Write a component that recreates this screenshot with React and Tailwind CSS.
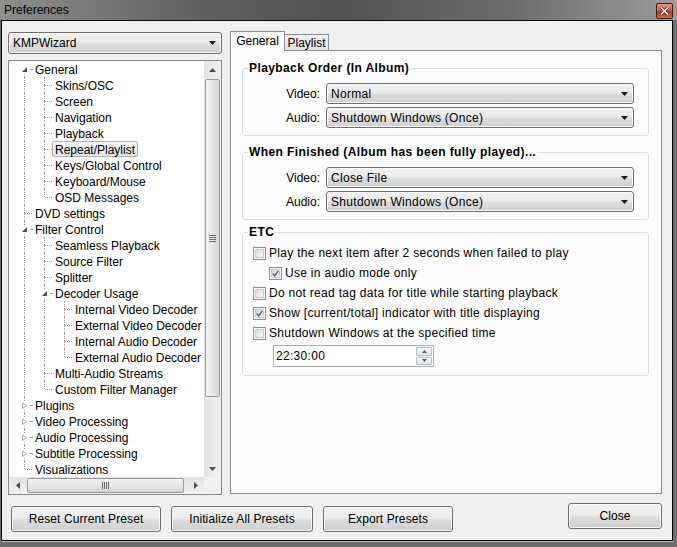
import React from "react";

const btnBg =
  "bg-[linear-gradient(#f2f2f2,#ebebeb_45%,#dddddd_55%,#cfcfcf)] shadow-[inset_0_0_0_1px_#fbfbfb]";

function DownArrow() {
  return (
    <svg width="7" height="4" viewBox="0 0 7 4">
      <path d="M0 0h7L3.5 4z" fill="#1b1b1b" />
    </svg>
  );
}

function Combo({ value, className = "", textClass = "" }) {
  return (
    <div
      className={`flex items-center justify-between rounded-[3px] border border-[#707070] pl-[4px] pr-[5px] ${btnBg} ${className}`}
    >
      <span className={`leading-none ${textClass}`}>{value}</span>
      <DownArrow />
    </div>
  );
}

function Button({ children, className = "" }) {
  return (
    <div
      className={`flex h-[26px] items-center justify-center rounded-[3px] border border-[#707070] tracking-[0.1px] ${btnBg} ${className}`}
    >
      {children}
    </div>
  );
}

function CheckBox({ checked }) {
  return (
    <div className="flex h-[13px] w-[13px] shrink-0 items-center justify-center border border-[#8e8f8f] bg-white p-[1px]">
      <div className="flex h-full w-full items-center justify-center border border-[#c9c9c9] bg-[linear-gradient(135deg,#d8d8d8,#f6f6f6)]">
        {checked && (
          <svg width="9" height="9" viewBox="0 0 9 9">
            <path d="M1 4.5l2.5 3L8 1" stroke="#4a5f97" strokeWidth="1.8" fill="none" />
          </svg>
        )}
      </div>
    </div>
  );
}

const tree = [
  { t: "General", g: [], exp: "open", first: true },
  { t: "Skins/OSC", g: [1] },
  { t: "Screen", g: [1] },
  { t: "Navigation", g: [1] },
  { t: "Playback", g: [1] },
  { t: "Repeat/Playlist", g: [1], sel: true },
  { t: "Keys/Global Control", g: [1] },
  { t: "Keyboard/Mouse", g: [1] },
  { t: "OSD Messages", g: [1], last: true },
  { t: "DVD settings", g: [] },
  { t: "Filter Control", g: [], exp: "open" },
  { t: "Seamless Playback", g: [1] },
  { t: "Source Filter", g: [1] },
  { t: "Splitter", g: [1] },
  { t: "Decoder Usage", g: [1], exp: "open" },
  { t: "Internal Video Decoder", g: [1, 1] },
  { t: "External Video Decoder", g: [1, 1] },
  { t: "Internal Audio Decoder", g: [1, 1] },
  { t: "External Audio Decoder", g: [1, 1], last: true },
  { t: "Multi-Audio Streams", g: [1] },
  { t: "Custom Filter Manager", g: [1], last: true },
  { t: "Plugins", g: [], exp: "closed" },
  { t: "Video Processing", g: [], exp: "closed" },
  { t: "Audio Processing", g: [], exp: "closed" },
  { t: "Subtitle Processing", g: [], exp: "closed" },
  { t: "Visualizations", g: [], last: true },
];

const dots = "border-dotted border-[#a0a0a0]";

function TreeRow({ row }) {
  return (
    <div className="flex h-[16px] items-stretch whitespace-nowrap">
      {row.g.map((on, i) => (
        <div key={i} className="relative w-[20px] shrink-0">
          {on ? <span className={`absolute left-[12px] top-0 bottom-0 border-l ${dots}`} /> : null}
        </div>
      ))}
      <div className="relative w-[20px] shrink-0">
        {!row.first && <span className={`absolute left-[12px] top-0 h-[8px] border-l ${dots}`} />}
        {!row.last && <span className={`absolute left-[12px] top-[8px] bottom-0 border-l ${dots}`} />}
        <span
          className={`absolute right-0 top-[8px] border-t ${dots} ${row.exp ? "left-[18px]" : "left-[13px]"}`}
        />
        {row.exp && (
          <span className="absolute left-[8px] top-[4px] flex h-[9px] w-[9px] items-center justify-center bg-white">
            {row.exp === "open" ? (
              <svg width="7" height="7" viewBox="0 0 7 7">
                <path d="M6 1V6H1z" fill="#4f4f4f" />
              </svg>
            ) : (
              <svg width="7" height="9" viewBox="0 0 7 9">
                <path d="M1.5 1.5L5.5 4.5L1.5 7.5z" fill="#fff" stroke="#a6a6a6" />
              </svg>
            )}
          </span>
        )}
      </div>
      <span
        className={`flex h-[16px] items-center rounded-[2px] border px-[2px] pt-[1px] ${
          row.sel
            ? "border-[#b3b3b3] bg-[linear-gradient(#f7f7f7,#e3e3e3)]"
            : "border-transparent"
        }`}
      >
        {row.t}
      </span>
    </div>
  );
}

function ScrollArrow({ dir }) {
  if (dir === "left" || dir === "right") {
    return (
      <svg width="4" height="7" viewBox="0 0 4 7">
        <path d={dir === "left" ? "M4 0v7L0 3.5z" : "M0 0v7L4 3.5z"} fill="#4d4d4d" />
      </svg>
    );
  }
  return (
    <svg width="7" height="4" viewBox="0 0 7 4">
      <path d={dir === "up" ? "M0 4h7L3.5 0z" : "M0 0h7L3.5 4z"} fill="#4d4d4d" />
    </svg>
  );
}

function GroupBox({ title, className = "", children }) {
  return (
    <fieldset className={`ml-[11px] w-[407px] rounded-[3px] border border-[#d5dfe5] ${className}`}>
      <legend className="ml-[5px] px-[1px] text-[12px] font-bold leading-[14px] tracking-[0.4px]">
        {title}
      </legend>
      {children}
    </fieldset>
  );
}

function ComboRow({ label, value }) {
  return (
    <div className="flex h-[21px] items-center">
      <span className="w-[77px] text-right">{label}</span>
      <Combo value={value} className="ml-[6px] h-[21px] w-[308px]" textClass="tracking-[0.3px]" />
    </div>
  );
}

function CheckRow({ checked, indent, children }) {
  return (
    <div className={`flex h-[20px] items-center gap-[3px] ${indent ? "pl-[26px]" : "pl-[10px]"}`}>
      <CheckBox checked={checked} />
      <span className="tracking-[0.3px]">{children}</span>
    </div>
  );
}

export default function App() {
  return (
    <div className="relative h-[547px] w-[677px] overflow-hidden bg-[#6e6e6e] font-['Liberation_Sans',Arial,sans-serif] text-[12px] text-black">
      <div className="flex h-[20px] items-center justify-between bg-[linear-gradient(90deg,#8e8e8e,#5f5f5f_30%,#525252_50%,#6b6b6b_75%,#9c9c9c)] pl-[4px] pr-[4px]">
        <span className="text-[12px] text-black">Preferences</span>
        <div className="mt-[1px] flex h-[16px] w-[17px] items-center justify-center rounded-[2px] border border-[#4a1a15] bg-[linear-gradient(#e39a89,#cf5a43_45%,#b8321e_55%,#d06a4f)]">
          <svg width="9" height="8" viewBox="0 0 9 8">
            <path d="M1 0.5l7 7M8 0.5l-7 7" stroke="#3a1d18" strokeWidth="3" />
            <path d="M1 0.5l7 7M8 0.5l-7 7" stroke="#fff" strokeWidth="1.6" />
          </svg>
        </div>
      </div>

      <div className="ml-[1px] flex h-[521px] w-[672px] flex-col border border-black bg-[#f0f0f0] pl-[6px] pr-[10px] pt-[11px]">
        <div className="flex items-start gap-[8px]">
          <div className="flex w-[214px] flex-col gap-[6px]">
            <Combo value="KMPWizard" className="h-[22px] w-[214px]" />
            <div className="flex h-[435px] w-[214px] flex-col border border-[#828790] bg-white">
              <div className="flex h-[416px]">
                <div className="w-[195px] overflow-hidden pl-[3px]">
                  {tree.map((r) => (
                    <TreeRow key={r.t} row={r} />
                  ))}
                </div>
                <div className="flex w-[17px] flex-col bg-[linear-gradient(90deg,#e3e3e3,#f1f1f1)]">
                  <div className="flex h-[17px] items-center justify-center">
                    <ScrollArrow dir="up" />
                  </div>
                  <div className="mx-[1px] mt-[1px] flex h-[318px] items-center justify-center rounded-[2px] border border-[#9b9b9b] bg-[linear-gradient(90deg,#f4f4f4,#e6e6e6_50%,#d4d4d4)]">
                    <div className="flex flex-col gap-[1px]">
                      <span className="h-[1px] w-[7px] bg-[#6e6e6e]" />
                      <span className="h-[1px] w-[7px] bg-[#6e6e6e]" />
                      <span className="h-[1px] w-[7px] bg-[#6e6e6e]" />
                      <span className="h-[1px] w-[7px] bg-[#6e6e6e]" />
                    </div>
                  </div>
                  <div className="flex-1" />
                  <div className="flex h-[17px] items-center justify-center">
                    <ScrollArrow dir="down" />
                  </div>
                </div>
              </div>
              <div className="flex h-[17px]">
                <div className="flex w-[195px] items-center bg-[linear-gradient(#e3e3e3,#f1f1f1)]">
                  <div className="flex h-[17px] w-[17px] items-center justify-center">
                    <ScrollArrow dir="left" />
                  </div>
                  <div className="ml-[1px] flex h-[15px] w-[157px] items-center justify-center rounded-[2px] border border-[#9b9b9b] bg-[linear-gradient(#f4f4f4,#e6e6e6_50%,#d4d4d4)]">
                    <div className="flex gap-[1px]">
                      <span className="h-[7px] w-[1px] bg-[#6e6e6e]" />
                      <span className="h-[7px] w-[1px] bg-[#6e6e6e]" />
                      <span className="h-[7px] w-[1px] bg-[#6e6e6e]" />
                      <span className="h-[7px] w-[1px] bg-[#6e6e6e]" />
                    </div>
                  </div>
                  <div className="flex-1" />
                  <div className="flex h-[17px] w-[17px] items-center justify-center">
                    <ScrollArrow dir="right" />
                  </div>
                </div>
                <div className="w-[17px] bg-[#f0f0f0]" />
              </div>
            </div>
          </div>

          <div className="flex w-[432px] flex-col">
            <div className="flex h-[18px] items-end">
              <div className="relative z-10 -mb-[1px] flex h-[20px] w-[55px] items-center justify-center border border-b-0 border-[#898c95] bg-[#fcfcfc] pb-[1px]">
                General
              </div>
              <div className="flex h-[16px] w-[44px] items-center justify-center border border-b-0 border-l-0 border-[#898c95] bg-[linear-gradient(#f2f2f2,#e3e3e3)]">
                Playlist
              </div>
            </div>
            <div className="flex h-[444px] flex-col border border-[#898c95] bg-[#fcfcfc]">
              <GroupBox title="Playback Order (In Album)" className="mt-[10px] pb-[7px] pt-[8px]">
                <div className="flex flex-col gap-[3px]">
                  <ComboRow label="Video:" value="Normal" />
                  <ComboRow label="Audio:" value="Shutdown Windows (Once)" />
                </div>
              </GroupBox>
              <GroupBox
                title="When Finished (Album has been fully played)..."
                className="mt-[9px] pb-[7px] pt-[8px]"
              >
                <div className="flex flex-col gap-[3px]">
                  <ComboRow label="Video:" value="Close File" />
                  <ComboRow label="Audio:" value="Shutdown Windows (Once)" />
                </div>
              </GroupBox>
              <GroupBox title="ETC" className="mt-[5px] pb-[8px] pt-[4px]">
                <CheckRow>Play the next item after 2 seconds when failed to play</CheckRow>
                <CheckRow checked indent>
                  Use in audio mode only
                </CheckRow>
                <CheckRow>Do not read tag data for title while starting playback</CheckRow>
                <CheckRow checked>Show [current/total] indicator with title displaying</CheckRow>
                <CheckRow>Shutdown Windows at the specified time</CheckRow>
                <div className="ml-[30px] mt-[2px] flex h-[22px] w-[161px] items-center justify-between border border-[#abadb3] bg-white pl-[2px] pr-[1px]">
                  <span className="tracking-[0.3px]">22:30:00</span>
                  <div className="flex h-[18px] w-[16px] flex-col gap-[1px]">
                    <div className="flex flex-1 items-center justify-center rounded-[1px] border border-[#b6bcc6] bg-[linear-gradient(#f5f6f8,#dfe3ea)]">
                      <svg width="5" height="3" viewBox="0 0 5 3">
                        <path d="M0 3h5L2.5 0z" fill="#4c607a" />
                      </svg>
                    </div>
                    <div className="flex flex-1 items-center justify-center rounded-[1px] border border-[#b6bcc6] bg-[linear-gradient(#f5f6f8,#dfe3ea)]">
                      <svg width="5" height="3" viewBox="0 0 5 3">
                        <path d="M0 0h5L2.5 3z" fill="#4c607a" />
                      </svg>
                    </div>
                  </div>
                </div>
              </GroupBox>
            </div>
          </div>
        </div>

        <div className="flex items-start">
          <Button className="ml-[3px] mt-[11px] w-[150px]">Reset Current Preset</Button>
          <Button className="ml-[10px] mt-[11px] w-[142px]">Initialize All Presets</Button>
          <Button className="ml-[10px] mt-[11px] w-[130px]">Export Presets</Button>
          <Button className="ml-auto mt-[8px] w-[94px]">Close</Button>
        </div>
      </div>
      <div className="ml-[1px] h-[1px] w-[673px] bg-[#b9b9b9]" />
    </div>
  );
}
